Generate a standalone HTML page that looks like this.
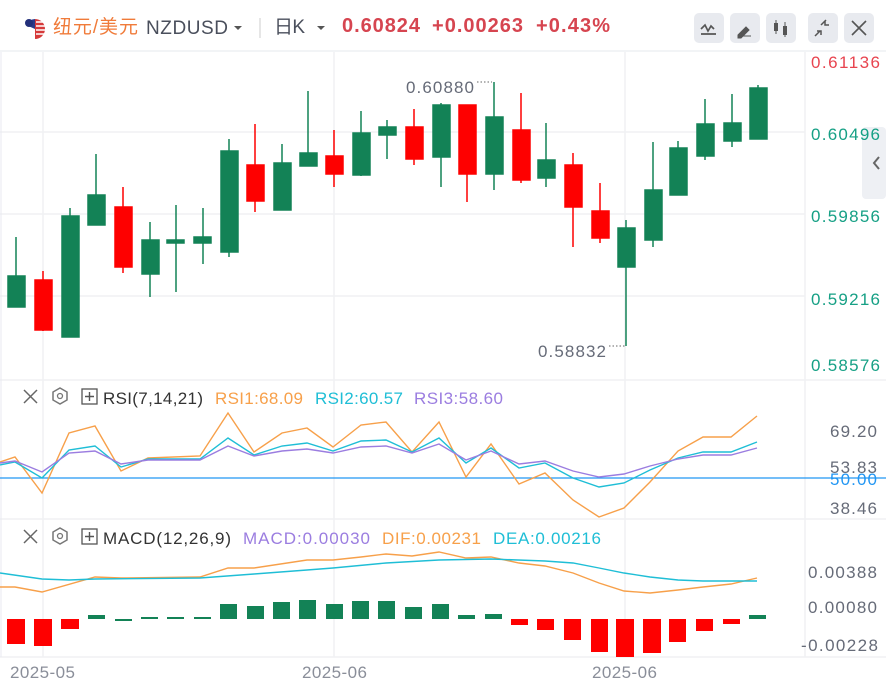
<!DOCTYPE html>
<html><head><meta charset="utf-8"><style>
body{margin:0;width:886px;height:689px;background:#fff;overflow:hidden;font-family:"Liberation Sans","Noto Sans CJK SC",sans-serif}
.abs{position:absolute}
</style></head><body>
<svg class="abs" style="left:0;top:0" width="886" height="689" xmlns="http://www.w3.org/2000/svg">
<line x1="0" y1="51" x2="886" y2="51" stroke="#eef0f4" stroke-width="1.5"/>
<!-- flag -->
<circle cx="35" cy="29" r="10" fill="#fff"/>
<path d="M35 19 a10 10 0 0 1 0 20z" fill="#d63a3a"/>
<path d="M36 22h9M36 26h10M36 30h10M36 34h9" stroke="#fff" stroke-width="1.6"/>
<path d="M35 19 a10 10 0 0 0 -9 6 l9 4z" fill="#2a3a8a"/>
<circle cx="29" cy="23" r="4" fill="#23307a"/>
<text x="53" y="33" font-size="19" fill="#f07b3a" textLength="85">纽元/美元</text>
<text x="146" y="34" font-size="19" fill="#4a4f5c" textLength="82">NZDUSD</text>
<path d="M234 26l4 4 4-4z" fill="#555"/>
<line x1="260" y1="18" x2="260" y2="38" stroke="#ccc"/>
<text x="274" y="33" font-size="19" fill="#4a4f5c" textLength="31">日K</text>
<path d="M317 26l4 4 4-4z" fill="#555"/>
<text x="342" y="32" font-size="20" font-weight="bold" fill="#d64550" textLength="78">0.60824</text>
<text x="432" y="32" font-size="20" font-weight="bold" fill="#d64550" textLength="91">+0.00263</text>
<text x="536" y="32" font-size="20" font-weight="bold" fill="#d64550" textLength="74">+0.43%</text>
<!-- buttons -->
<g fill="#e8eaef"><rect x="694" y="13" width="30" height="30" rx="5"/><rect x="730" y="13" width="30" height="30" rx="5"/><rect x="766" y="13" width="30" height="30" rx="5"/><rect x="808" y="13" width="30" height="30" rx="5"/><rect x="844" y="13" width="30" height="30" rx="5"/></g>
<path d="M701 29l4-4 3 6 3-5 3 3M701 34h15" stroke="#555" stroke-width="1.7" fill="none"/>
<path d="M738 35l8-8 3 3-8 8h-3zM738 36h13" fill="#555" stroke="#555" stroke-width="1"/>
<g fill="#555"><rect x="774" y="23" width="4" height="8"/><line x1="776" y1="20" x2="776" y2="34" stroke="#555"/><rect x="783" y="26" width="4" height="9"/><line x1="785" y1="22" x2="785" y2="37" stroke="#555"/></g>
<path d="M815 36l5-5M826 20l-5 5" stroke="#555" stroke-width="1.5"/>
<path d="M817 31h4v4M829 25h-4v-4" stroke="#555" stroke-width="1.5" fill="none"/>
<path d="M852 21l14 14M866 21l-14 14" stroke="#555" stroke-width="1.6"/>
<!-- grids -->
<g stroke="#f0f1f4" stroke-width="1.5">
<line x1="0" y1="132" x2="805" y2="132"/><line x1="0" y1="214" x2="805" y2="214"/><line x1="0" y1="296" x2="805" y2="296"/>
<line x1="43" y1="52" x2="43" y2="657"/><line x1="334" y1="52" x2="334" y2="657"/><line x1="625" y1="52" x2="625" y2="657"/>
<line x1="0" y1="380" x2="886" y2="380"/><line x1="0" y1="519" x2="886" y2="519"/><line x1="0" y1="657" x2="886" y2="657"/>
<line x1="805" y1="52" x2="805" y2="657"/>
</g>
<line x1="1" y1="52" x2="1" y2="657" stroke="#e8eaf0"/>
<!-- candles -->
<g stroke-width="1.5">
<g stroke="#138256" fill="#138256">
<line x1="16" y1="237" x2="16" y2="307"/><rect x="8" y="276" width="17" height="31"/>
<line x1="70" y1="208" x2="70" y2="337"/><rect x="62" y="216" width="17" height="121"/>
<line x1="96" y1="154" x2="96" y2="225"/><rect x="88" y="195" width="17" height="30"/>
<line x1="150" y1="222" x2="150" y2="297"/><rect x="142" y="240" width="17" height="34"/>
<line x1="176" y1="205" x2="176" y2="292"/><rect x="167" y="240" width="17" height="3"/>
<line x1="203" y1="208" x2="203" y2="264"/><rect x="194" y="237" width="17" height="6"/>
<line x1="229" y1="139" x2="229" y2="257"/><rect x="221" y="151" width="17" height="101"/>
<line x1="282" y1="144" x2="282" y2="210"/><rect x="274" y="163" width="17" height="47"/>
<line x1="308" y1="91" x2="308" y2="166"/><rect x="300" y="153" width="17" height="13"/>
<line x1="361" y1="111" x2="361" y2="176"/><rect x="353" y="133" width="17" height="42"/>
<line x1="387" y1="120" x2="387" y2="159"/><rect x="379" y="127" width="17" height="8"/>
<line x1="441" y1="103" x2="441" y2="187"/><rect x="433" y="105" width="17" height="52"/>
<line x1="494" y1="82" x2="494" y2="190"/><rect x="486" y="117" width="17" height="57"/>
<line x1="546" y1="123" x2="546" y2="187"/><rect x="538" y="160" width="17" height="18"/>
<line x1="626" y1="220" x2="626" y2="346"/><rect x="618" y="228" width="17" height="39"/>
<line x1="653" y1="142" x2="653" y2="247"/><rect x="645" y="190" width="17" height="50"/>
<line x1="678" y1="141" x2="678" y2="195"/><rect x="670" y="148" width="17" height="47"/>
<line x1="705" y1="99" x2="705" y2="160"/><rect x="697" y="124" width="17" height="32"/>
<line x1="732" y1="94" x2="732" y2="147"/><rect x="724" y="123" width="17" height="18"/>
<line x1="758" y1="85" x2="758" y2="139"/><rect x="750" y="88" width="17" height="51"/>
</g>
<g stroke="#fe0000" fill="#fe0000">
<line x1="43" y1="271" x2="43" y2="331"/><rect x="35" y="280" width="17" height="50"/>
<line x1="123" y1="187" x2="123" y2="273"/><rect x="115" y="207" width="17" height="60"/>
<line x1="255" y1="124" x2="255" y2="212"/><rect x="247" y="165" width="17" height="36"/>
<line x1="334" y1="130" x2="334" y2="187"/><rect x="326" y="156" width="17" height="18"/>
<line x1="414" y1="109" x2="414" y2="165"/><rect x="406" y="127" width="17" height="32"/>
<line x1="467" y1="105" x2="467" y2="202"/><rect x="459" y="105" width="17" height="69"/>
<line x1="521" y1="93" x2="521" y2="183"/><rect x="513" y="130" width="17" height="50"/>
<line x1="573" y1="153" x2="573" y2="247"/><rect x="565" y="165" width="17" height="42"/>
<line x1="600" y1="183" x2="600" y2="243"/><rect x="592" y="211" width="17" height="27"/>
</g></g>
<g font-size="17" fill="#666b78">
<text x="406" y="93" textLength="68">0.60880</text><path d="M477 82h15" stroke="#666" stroke-dasharray="1.5 2"/>
<text x="538" y="357" textLength="68">0.58832</text><path d="M609 346h17" stroke="#666" stroke-dasharray="1.5 2"/>
</g>
<rect x="862" y="127" width="24" height="72" rx="4" fill="#eef0f4"/>
<path d="M879 157l-5 6 5 6" stroke="#666" stroke-width="2" fill="none"/>
<g font-size="17" fill="#16a085">
<text x="811" y="68" fill="#e8444f" textLength="69">0.61136</text>
<text x="811" y="140" textLength="69">0.60496</text><text x="811" y="222" textLength="69">0.59856</text><text x="811" y="305" textLength="69">0.59216</text><text x="811" y="371" textLength="69">0.58576</text>
</g>
<!-- RSI -->
<g font-size="17">
<path d="M24 390l13 13M37 390l-13 13" stroke="#666" stroke-width="1.5"/>
<path d="M60 388l7 4v8l-7 4-7-4v-8z" stroke="#777" stroke-width="1.5" fill="none"/><circle cx="60" cy="396" r="2.5" stroke="#777" fill="none" stroke-width="1.3"/>
<rect x="82" y="389" width="15" height="15" stroke="#555" fill="none" stroke-width="1.3"/><path d="M89.5 392v9M85 396.5h9" stroke="#555" stroke-width="1.4"/>
<text x="103" y="404" fill="#333" textLength="100">RSI(7,14,21)</text>
<text x="215" y="404" fill="#f7a04a" textLength="88">RSI1:68.09</text>
<text x="315" y="404" fill="#1fbed6" textLength="88">RSI2:60.57</text>
<text x="414" y="404" fill="#9b7de0" textLength="89">RSI3:58.60</text>
</g>
<line x1="0" y1="478" x2="886" y2="478" stroke="#2196f3" stroke-width="1.2"/>
<g font-size="17" fill="#666b78">
<text x="830" y="437" textLength="47">69.20</text><text x="830" y="473" textLength="47">53.83</text><text x="830" y="485" fill="#2196f3" textLength="47">50.00</text><text x="830" y="514" textLength="47">38.46</text>
</g>
<g fill="none" stroke-width="1.4">
<polyline stroke="#f7a04a" points="0,462 15,457 42,493 69,433 95,426 121,471 148,458 200,456 228,413 254,452 282,433 307,428 333,447 361,425 386,422 412,452 439,422 466,477 491,444 519,484 545,473 573,500 599,517 624,508 650,482 678,451 703,437 731,437 757,416"/>
<polyline stroke="#1fbed6" points="0,465 15,462 42,478 69,450 95,446 121,467 148,459 200,459 228,438 254,455 282,446 307,443 333,451 361,441 386,440 412,452 439,438 466,463 491,448 519,468 545,463 573,478 599,487 624,483 650,470 678,458 703,452 731,452 757,442"/>
<polyline stroke="#9b7de0" points="0,463 15,461 42,472 69,453 95,451 121,464 148,460 200,460 228,446 254,456 282,451 307,449 333,453 361,447 386,446 412,453 439,444 466,460 491,451 519,464 545,461 573,471 599,477 624,474 650,466 678,459 703,455 731,455 757,448"/>
</g>
<!-- MACD -->
<g font-size="17">
<path d="M24 530l13 13M37 530l-13 13" stroke="#666" stroke-width="1.5"/>
<path d="M60 528l7 4v8l-7 4-7-4v-8z" stroke="#777" stroke-width="1.5" fill="none"/><circle cx="60" cy="536" r="2.5" stroke="#777" fill="none" stroke-width="1.3"/>
<rect x="82" y="529" width="15" height="15" stroke="#555" fill="none" stroke-width="1.3"/><path d="M89.5 532v9M85 536.5h9" stroke="#555" stroke-width="1.4"/>
<text x="103" y="544" fill="#333" textLength="128">MACD(12,26,9)</text>
<text x="243" y="544" fill="#9b7de0" textLength="127">MACD:0.00030</text>
<text x="382" y="544" fill="#f7a04a" textLength="99">DIF:0.00231</text>
<text x="493" y="544" fill="#1fbed6" textLength="108">DEA:0.00216</text>
</g>
<g font-size="17" fill="#666b78">
<text x="808" y="578" textLength="69">0.00388</text><text x="808" y="613" textLength="69">0.00080</text><text x="801" y="651" textLength="77">-0.00228</text>
</g>
<g fill="none" stroke-width="1.4">
<polyline stroke="#f7a04a" points="0,587 15,587 42,592 95,577 121,578 200,577 228,568 254,568 307,560 333,560 361,557 386,554 412,556 439,552 466,558 491,557 519,563 545,566 573,573 599,583 624,591 650,593 678,590 703,587 731,584 757,578"/>
<polyline stroke="#1fbed6" points="0,573 42,579 69,580 95,579 200,578 254,574 307,570 333,568 386,563 439,560 491,559 545,561 573,563 599,568 624,573 650,577 678,580 703,581 731,581 757,581"/>
</g>
<g fill="#138256">
<rect x="88" y="615" width="17" height="4"/><rect x="115" y="619" width="17" height="2"/><rect x="141" y="617" width="17" height="2"/><rect x="167" y="617" width="17" height="2"/><rect x="194" y="617" width="17" height="2"/>
<rect x="220" y="604" width="17" height="15"/><rect x="247" y="606" width="17" height="13"/><rect x="273" y="602" width="17" height="17"/><rect x="299" y="600" width="17" height="19"/><rect x="326" y="604" width="17" height="15"/><rect x="352" y="601" width="17" height="18"/><rect x="378" y="601" width="17" height="18"/><rect x="405" y="607" width="17" height="12"/><rect x="432" y="604" width="17" height="15"/><rect x="458" y="615" width="17" height="4"/><rect x="485" y="614" width="17" height="5"/><rect x="749" y="615" width="17" height="4"/>
</g>
<g fill="#fe0000">
<rect x="7" y="619" width="18" height="25"/><rect x="34" y="619" width="18" height="27"/><rect x="61" y="619" width="18" height="10"/>
<rect x="511" y="619" width="17" height="6"/><rect x="537" y="619" width="17" height="11"/><rect x="564" y="619" width="17" height="21"/><rect x="591" y="619" width="17" height="33"/><rect x="616" y="619" width="18" height="38"/><rect x="643" y="619" width="18" height="34"/><rect x="669" y="619" width="17" height="23"/><rect x="696" y="619" width="17" height="12"/><rect x="723" y="619" width="17" height="5"/>
</g>
<g font-size="17" fill="#8a8e99">
<text x="10" y="678" textLength="65">2025-05</text><text x="302" y="678" textLength="65">2025-06</text><text x="592" y="678" textLength="65">2025-06</text>
</g>
</svg>
</body></html>
